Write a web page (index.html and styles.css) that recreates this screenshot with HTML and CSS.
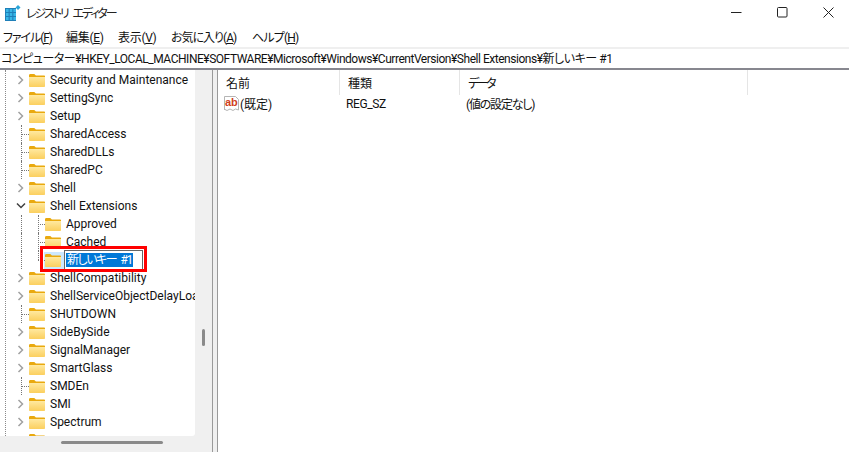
FILE: index.html
```html
<!DOCTYPE html>
<html lang="ja">
<head>
<meta charset="utf-8">
<title>レジストリ エディター</title>
<link rel="stylesheet" href="styles.css">
</head>
<body>
<svg width="0" height="0" class="defs">
  <defs>
    <linearGradient id="fg" x1="0" y1="0" x2="0" y2="1"><stop offset="0" stop-color="#ffe9a0"/><stop offset="1" stop-color="#fbcf5e"/></linearGradient>
    <symbol id="folder" viewBox="0 0 16 13">
      <path d="M0 1.500C0 .7.500 0 1.300 0h4l1.600 1.600H15c.6 0 1 .4 1 1V3H0z" fill="#e9a90f"/>
      <path d="M0 3h16v9c0 .6-.4 1-1 1H1c-.6 0-1-.4-1-1z" fill="url(#fg)"/>
    </symbol>
    <symbol id="chev-r" viewBox="0 0 8 10"><path d="M1.500 1 5.500 5 1.500 9" fill="none" stroke="#a0a0a0" stroke-width="1.500"/></symbol>
    <symbol id="chev-d" viewBox="0 0 10 8"><path d="M1 1.500 5 5.500 9 1.500" fill="none" stroke="#404040" stroke-width="1.500"/></symbol>
  </defs>
</svg>
<header class="titlebar">
  <svg class="app-icon" width="16" height="16" viewBox="0 0 16 16">
    <path d="M0 3h11v13H0z" fill="#1f7fb8"/>
    <path d="M1 4h2.600v3H1zm3.700 0h2.600v3H4.700zm3.700 0H11v3H8.400zM1 8h2.600v3H1zm3.700 0h2.600v3H4.700zm3.700 0H11v3H8.400zM1 12h2.600v3H1zm3.700 0h2.600v3H4.700zm3.700 0H11v3H8.400z" fill="#38b6e6"/>
    <path d="M13 0l2.500 2.500L13 5l-2.500-2.500z" fill="#2aa5d8"/>
  </svg>
  <span class="title">レジストリ エディター</span>
  <div class="win-buttons">
    <svg width="11" height="11" viewBox="0 0 11 11"><path d="M0 5.500h10.500" stroke="#222" fill="none"/></svg>
    <svg width="11" height="11" viewBox="0 0 11 11"><rect x=".5" y=".5" width="9.500" height="9.500" rx="1" stroke="#222" fill="none"/></svg>
    <svg width="11" height="11" viewBox="0 0 11 11"><path d="M.5.500l10 10M10.500.500l-10 10" stroke="#222" fill="none"/></svg>
  </div>
</header>
<nav class="menubar">
  <span class="m1">ファイル(<u>F</u>)</span>
  <span class="m2">編集(<u>E</u>)</span>
  <span class="m3">表示(<u>V</u>)</span>
  <span class="m4">お気に入り(<u>A</u>)</span>
  <span class="m5">ヘルプ(<u>H</u>)</span>
</nav>
<div class="address">コンピューター¥HKEY_LOCAL_MACHINE¥SOFTWARE¥Microsoft¥Windows¥CurrentVersion¥Shell Extensions¥新しいキー #1</div>
<main class="panes">
  <section class="tree-pane">
    <div class="tree-wrap">
      <div class="tree">
        <div class="row"><svg class="chev"><use href="#chev-r"/></svg><svg class="folder"><use href="#folder"/></svg><span>Security and Maintenance</span></div>
        <div class="row"><svg class="chev"><use href="#chev-r"/></svg><svg class="folder"><use href="#folder"/></svg><span>SettingSync</span></div>
        <div class="row"><svg class="chev"><use href="#chev-r"/></svg><svg class="folder"><use href="#folder"/></svg><span>Setup</span></div>
        <div class="row"><i class="dots"></i><svg class="folder"><use href="#folder"/></svg><span>SharedAccess</span></div>
        <div class="row"><i class="dots"></i><svg class="folder"><use href="#folder"/></svg><span>SharedDLLs</span></div>
        <div class="row"><i class="dots"></i><svg class="folder"><use href="#folder"/></svg><span>SharedPC</span></div>
        <div class="row"><svg class="chev"><use href="#chev-r"/></svg><svg class="folder"><use href="#folder"/></svg><span>Shell</span></div>
        <div class="row"><svg class="chev-open"><use href="#chev-d"/></svg><svg class="folder"><use href="#folder"/></svg><span>Shell Extensions</span></div>
        <div class="row child"><i class="vdots"></i><i class="dots"></i><svg class="folder"><use href="#folder"/></svg><span>Approved</span></div>
        <div class="row child"><i class="vdots"></i><i class="dots"></i><svg class="folder"><use href="#folder"/></svg><span>Cached</span></div>
        <div class="row child selected"><i class="vdots half"></i><i class="dots"></i><span class="sel-bg"><svg class="folder"><use href="#folder"/></svg></span><span class="edit"><span class="edit-text">新しいキー #1</span></span></div>
        <div class="row"><svg class="chev"><use href="#chev-r"/></svg><svg class="folder"><use href="#folder"/></svg><span>ShellCompatibility</span></div>
        <div class="row clip"><svg class="chev"><use href="#chev-r"/></svg><svg class="folder"><use href="#folder"/></svg><span>ShellServiceObjectDelayLoa</span></div>
        <div class="row"><i class="dots"></i><svg class="folder"><use href="#folder"/></svg><span>SHUTDOWN</span></div>
        <div class="row"><svg class="chev"><use href="#chev-r"/></svg><svg class="folder"><use href="#folder"/></svg><span>SideBySide</span></div>
        <div class="row"><svg class="chev"><use href="#chev-r"/></svg><svg class="folder"><use href="#folder"/></svg><span>SignalManager</span></div>
        <div class="row"><svg class="chev"><use href="#chev-r"/></svg><svg class="folder"><use href="#folder"/></svg><span>SmartGlass</span></div>
        <div class="row"><i class="dots"></i><svg class="folder"><use href="#folder"/></svg><span>SMDEn</span></div>
        <div class="row"><svg class="chev"><use href="#chev-r"/></svg><svg class="folder"><use href="#folder"/></svg><span>SMI</span></div>
        <div class="row"><svg class="chev"><use href="#chev-r"/></svg><svg class="folder"><use href="#folder"/></svg><span>Spectrum</span></div>
        <div class="row"><svg class="folder"><use href="#folder"/></svg></div>
      </div>
      <div class="vscroll"><i class="vthumb"></i></div>
    </div>
    <div class="hscroll"><i class="hthumb"></i></div>
  </section>
  <div class="splitter"></div>
  <section class="list-pane">
    <div class="list-head">
      <div class="col c1">名前</div>
      <div class="col c2">種類</div>
      <div class="col c3"><span class="kana">データ</span></div>
    </div>
    <div class="list-row">
      <div class="c1 cell-name">
        <svg class="ab" width="17" height="17" viewBox="0 0 17 17">
          <path d="M1.500 1.500h11l3 3v10.500l-3-1-2.500 1.500-3-1.500-3 1.500-2-1-.5.500z" fill="#fff" stroke="#b5b5b5"/>
          <text x="2" y="10.500" class="ab-text">ab</text>
        </svg>
        <span>(既定)</span>
      </div>
      <div class="c2 cell regsz">REG_SZ</div>
      <div class="c3 cell nodata">(値の設定なし)</div>
    </div>
  </section>
</main>
<div class="annotation"></div>
</body>
</html>
```
FILE: styles.css
```css
* { box-sizing: border-box; }
html, body { margin: 0; height: 100%; }
body {
  width: 849px; height: 452px; overflow: hidden; background: #fff; position: relative;
  display: flex; flex-direction: column;
  font: 12px Roboto, "Noto Sans CJK JP", sans-serif; color: #111;
  font-feature-settings: "palt";
}
.defs { position: absolute; }
.titlebar { height: 26px; flex: none; display: flex; align-items: center; padding: 0 0 1px 5px; }
.app-icon { flex: none; }
.title { margin-left: 5px; font-size: 12px; color: #222; letter-spacing: -2.100px; word-spacing: 4px; }
.win-buttons { margin-left: auto; display: flex; gap: 35px; padding-right: 15px; align-items: center; padding-bottom: 1px; }
.menubar { height: 21px; flex: none; display: flex; padding-left: 3px; align-items: center; font-size: 12px; }
.m1 { width: 63px; letter-spacing: -1.100px; }
.m2 { width: 52px; letter-spacing: -.3px; }
.m3 { width: 53px; letter-spacing: -.3px; }
.m4 { width: 81px; letter-spacing: -1px; }
.m5 { letter-spacing: -.8px; }
.address {
  height: 23px; flex: none; border-top: 2px solid #efefef; border-bottom: 2px solid #87878f;
  padding-left: 1px; line-height: 21px; white-space: nowrap; font-size: 12px; letter-spacing: -.47px;
}
.panes { flex: 1; display: flex; min-height: 0; }
.tree-pane { width: 212px; flex: none; display: flex; flex-direction: column; background: #f0f0f0; }
.tree-wrap { flex: 1; display: flex; min-height: 0; }
.tree {
  width: 195px; flex: none; background: #fff; overflow: hidden; padding-top: 1px;
  border-bottom-right-radius: 3px; position: relative;
}
.tree::before { content: ""; position: absolute; left: 5px; top: 0; bottom: 0; border-left: 1px dotted #8a8a8a; }
.row { height: 18px; display: flex; align-items: center; padding-left: 29px; position: relative; white-space: nowrap; }
.row > span:last-child { margin-left: 5px; }
.row.child { padding-left: 45px; }
.row.child::before { content: ""; position: absolute; left: 21px; top: 0; height: 18px; border-left: 1px dotted #777; }
.folder { width: 16px; height: 13px; flex: none; }
.chev, .chev-open, .dots, .vdots { position: absolute; }
.chev { left: 17px; top: 4px; width: 8px; height: 10px; }
.chev-open { left: 16px; top: 5px; width: 10px; height: 8px; }
.dots { left: 21px; top: 9px; width: 8px; border-top: 1px dotted #777; }
.row:not(.child) > .dots::before { content: ""; position: absolute; left: 0; top: -10px; height: 18px; border-left: 1px dotted #777; }
.child .dots { left: 38px; width: 7px; }
.vdots { left: 38px; top: 0; height: 18px; border-left: 1px dotted #777; }
.vdots.half { height: 9px; }
.sel-bg { background: #cce8ff; display: flex; padding: 2px 3px 2px 1px; margin-left: -1px; }
.row > span.edit { margin-left: 0; }
.edit { border: 1px solid #666; height: 20px; width: 79px; display: flex; align-items: center; padding-left: 1px; background: #fff; }
.edit-text { background: #0078d7; color: #fff; line-height: 14px; padding: 0 1px; letter-spacing: -1.500px; word-spacing: 3px; }
.vscroll { width: 17px; flex: none; display: flex; justify-content: center; padding-top: 259px; }
.vthumb { width: 3px; height: 17px; background: #8a8a8a; border-radius: 2px; }
.hscroll { height: 16px; flex: none; padding: 5px 0 0 61px; }
.hthumb { display: block; width: 102px; height: 3px; background: #8a8a8a; border-radius: 2px; }
.splitter { width: 6px; flex: none; background: #f0f0f0; border-left: 1px solid #9a9a9a; border-right: 1px solid #9a9a9a; }
.list-pane { flex: 1; min-width: 0; }
.list-head { height: 25px; display: flex; align-items: center; }
.col { height: 25px; display: flex; align-items: center; padding-left: 8px; border-right: 1px solid #e5e5e5; }
.kana { letter-spacing: -2.500px; }
.c1 { width: 122px; }
.c2 { width: 120px; }
.c3 { width: 288px; }
.list-row { display: flex; height: 17px; align-items: center; }
.cell { padding-left: 6px; }
.regsz { letter-spacing: -.4px; }
.nodata { letter-spacing: -1.200px; }
.cell-name { display: flex; align-items: center; padding-left: 5px; }
.ab-text { font: bold 11px "Liberation Sans", sans-serif; fill: #d0401c; }
.annotation { position: absolute; left: 40px; top: 246px; width: 107px; height: 26px; border: 3px solid #f00; }
```
